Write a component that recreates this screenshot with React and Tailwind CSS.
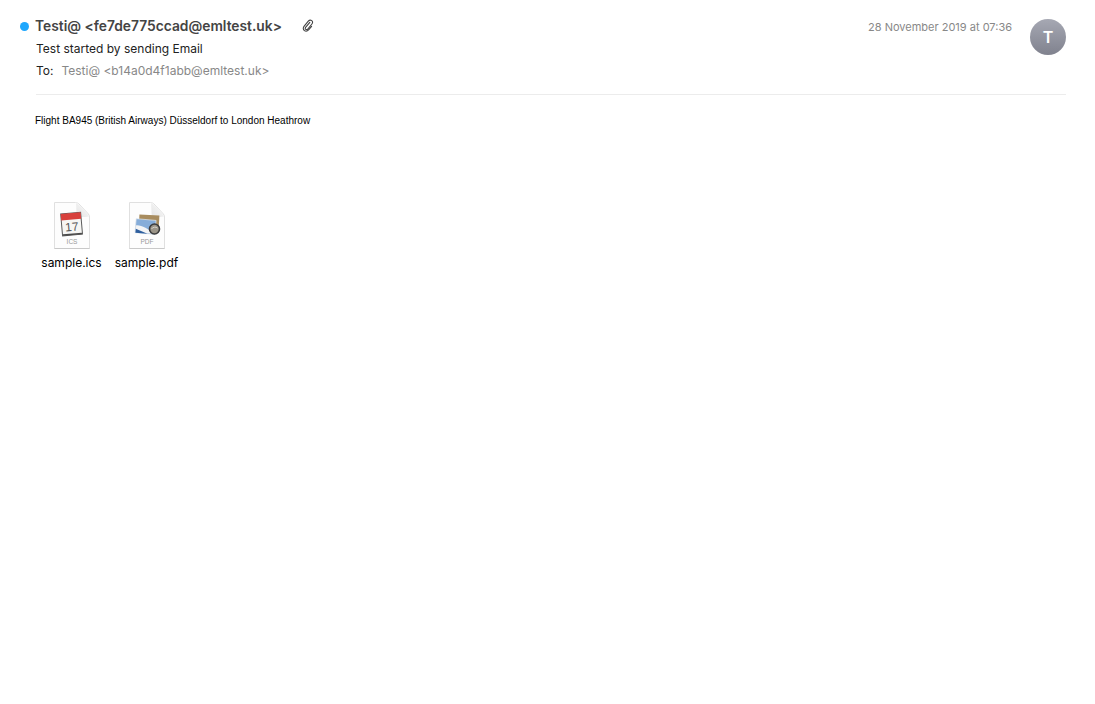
function FileShape({ id, label, children }) {
  return (
    <svg width="36" height="47" viewBox="0 0 36 47" className="block">
      <defs>
        <linearGradient id={`fold-${id}`} x1="0" y1="1" x2="1" y2="0">
          <stop offset="0" stopColor="#e4e4e4" />
          <stop offset="1" stopColor="#fafafa" />
        </linearGradient>
      </defs>
      <path d="M0.5 0.5H21.5C23 0.5 24 1 25 2L33.5 11C34.8 12.4 35.5 13.5 35.5 15V46.5H0.5Z" fill="#fdfdfd" stroke="#e0e0e0" />
      <path d="M0.5 46.5H35.5" stroke="#c9c9c9" />
      <path d="M22 1C22.5 8 22.5 13 23 14.5C27 15.5 31 15 35 14.5C34 12 26 3 22 1Z" fill={`url(#fold-${id})`} />
      {children}
      <text x="18" y="41.5" textAnchor="middle" fontSize="6.5" fontFamily="Liberation Sans, sans-serif" fill="#999">
        {label}
      </text>
    </svg>
  );
}

function IcsIcon() {
  return (
    <FileShape id="ics" label="ICS">
      <g transform="rotate(-5 18 21)">
        <rect x="7.5" y="11" width="20" height="22" fill="#f6f6f4" stroke="#5b5b5b" />
        <path d="M8 31.5H27V33H8Z" fill="#4a4a4a" />
        <rect x="7.5" y="11" width="20" height="6.5" fill="#d8403c" />
        <text x="17.5" y="29" textAnchor="middle" fontSize="12" fontFamily="Liberation Sans, sans-serif" fill="#555">
          17
        </text>
      </g>
    </FileShape>
  );
}

function PdfIcon() {
  return (
    <FileShape id="pdf" label="PDF">
      <rect x="10" y="13" width="20" height="17" fill="#a88c5e" transform="rotate(3 20 21)" />
      <g transform="rotate(5 16 25)">
        <rect x="6.5" y="17.5" width="20" height="14" fill="#86add9" stroke="#dfe5ea" strokeWidth="0.7" />
        <path d="M7 24 C12 23 19 26 26 31 H7Z" fill="#f3f4f5" />
        <path d="M7 27.5 L19 31.5 H7Z" fill="#2f5f9e" />
      </g>
      <circle cx="25.5" cy="27" r="5" fill="#9b9588" stroke="#3c3c3c" strokeWidth="1.6" />
      <path d="M22.5 27C23.5 25 27 24.5 28.5 26" fill="none" stroke="#d8d4ca" strokeWidth="1" />
    </FileShape>
  );
}

function ClipIcon() {
  return (
    <svg width="12" height="13" viewBox="0 0 12 13" fill="none" stroke="#444" strokeWidth="1.1" strokeLinecap="round" className="block">
      <path d="M7.8 3.4 3.6 8.4C3 9.2 3.2 10 3.8 10.4 4.5 10.9 5.2 10.7 5.8 10L9.9 5C10.9 3.8 10.8 2.4 9.7 1.6 8.6 0.8 7.3 1 6.3 2.2L2.2 7.2C0.9 8.8 1 10.6 2.4 11.6 3.8 12.6 5.5 12.2 6.8 10.7L9.6 7.3" />
    </svg>
  );
}

function Attachment({ name, icon }) {
  return (
    <div className="flex w-[75px] flex-col items-center">
      {icon}
      <span className="mt-[6px] text-[12px] leading-[16px] text-black">{name}</span>
    </div>
  );
}

export default function App() {
  return (
    <div className="min-h-screen bg-white pl-[36px] pr-[29px] pt-[16px] font-['Inter',sans-serif]">
      <div className="flex items-start justify-between border-b border-[#ececec] pb-[13px]">
        <div>
          <div className="relative flex h-[20px] items-center">
            <span className="absolute left-[-16px] top-[6px] h-[9px] w-[9px] rounded-full bg-[#1ea7fd]" />
            <span className="-ml-px text-[13.8px] font-semibold text-[#444]">Testi@ &lt;fe7de775ccad@emltest.uk&gt;</span>
            <span className="-mt-[1px] ml-[20px]">
              <ClipIcon />
            </span>
          </div>
          <div className="mt-[3px] text-[12px] leading-[20px] text-[#222]">Test started by sending Email</div>
          <div className="mt-[2px] flex text-[12px] leading-[20px]">
            <span className="text-[#222]">To:</span>
            <span className="ml-[8px] text-[#888]">Testi@ &lt;b14a0d4f1abb@emltest.uk&gt;</span>
          </div>
        </div>
        <div className="flex items-start">
          <span className="mt-[3px] text-[11px] leading-[16px] text-[#888]">28 November 2019 at 07:36</span>
          <div className="ml-[18px] mt-[3px] flex h-[36px] w-[36px] items-center justify-center rounded-full bg-gradient-to-b from-[#a6a8b3] to-[#80828e] text-[16px] font-semibold text-white">
            T
          </div>
        </div>
      </div>
      <p className="mt-[20px] -ml-px font-['Liberation_Sans',sans-serif] text-[10px] leading-[12px] text-black">
        Flight BA945 (British Airways) Düsseldorf to London Heathrow
      </p>
      <div className="-ml-[2px] mt-[75px] flex">
        <Attachment name="sample.ics" icon={<IcsIcon />} />
        <Attachment name="sample.pdf" icon={<PdfIcon />} />
      </div>
    </div>
  );
}
